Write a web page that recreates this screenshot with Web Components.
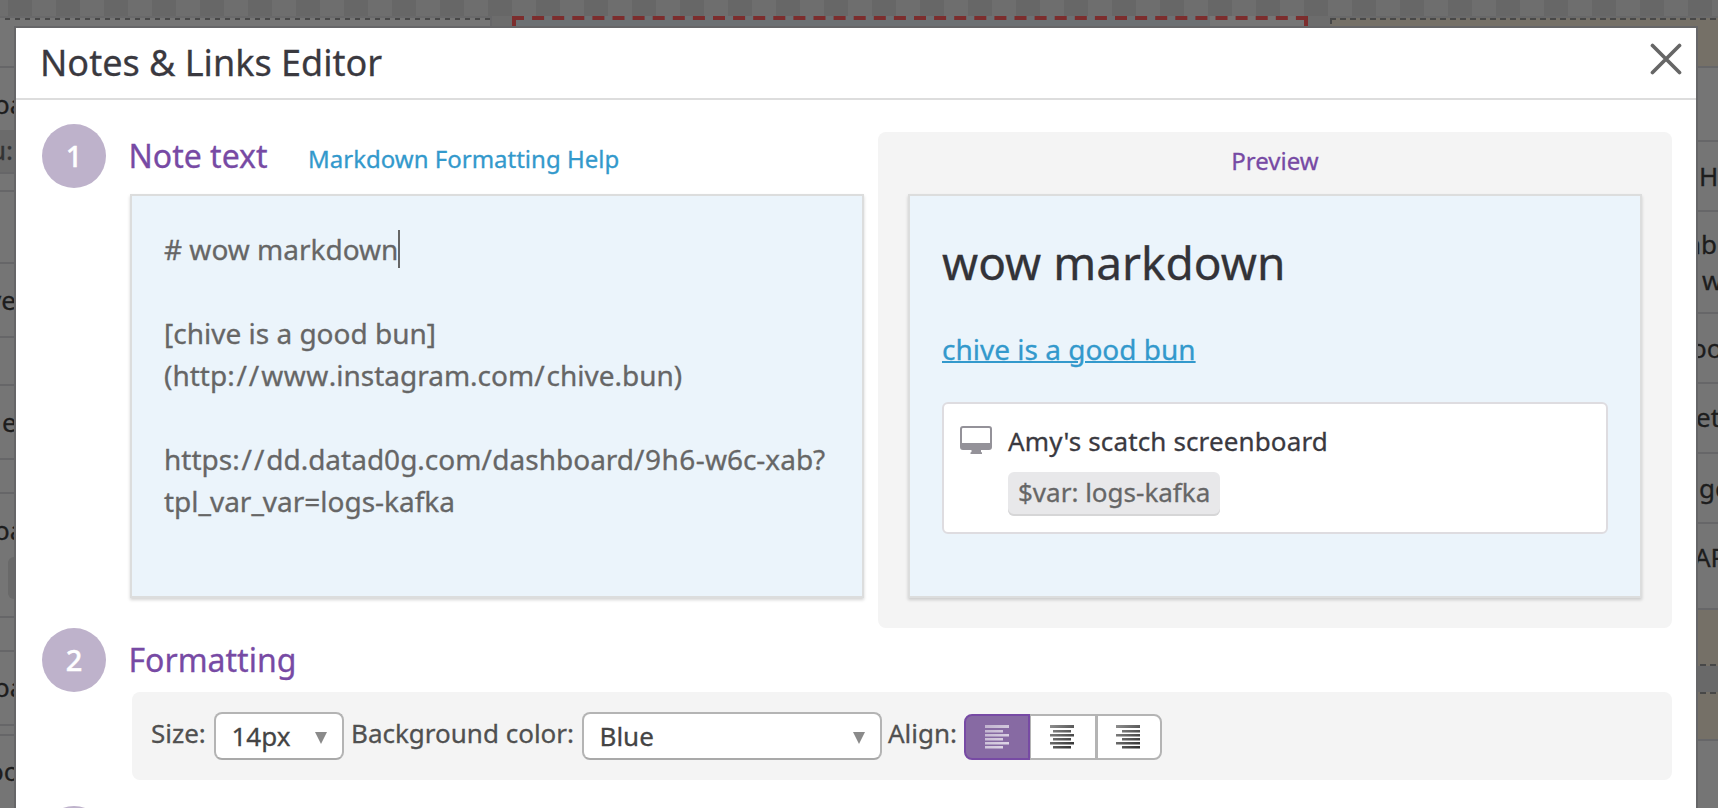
<!DOCTYPE html>
<html lang="en">
<head>
<meta charset="utf-8">
<title>Notes &amp; Links Editor</title>
<style>
html,body{margin:0;height:100%;overflow:hidden}
body{font-family:"Noto Sans","Open Sans",sans-serif;background:#696969;-webkit-text-stroke:.3px}
</style>
</head>
<body>
<app-screen></app-screen>
<script>
const define = (name, html) => customElements.define(name, class extends HTMLElement {
  constructor() {
    super();
    this.attachShadow({ mode: 'open' }).innerHTML = html.replace(/\$\{(\w+)\}/g, (_, k) => this.getAttribute(k) || '');
  }
});

/* One row of a dimmed dashboard widget list */
define('board-row', `<style>
:host{display:block;box-sizing:border-box;flex:none;overflow:hidden;background:#757575;border-bottom:2px solid #666668;color:#1d1d1d;font-size:26px;line-height:36px;white-space:pre}
:host([tone=note]){background:#757067}
:host([tone=gap]){background:#696969}
:host([tone=tag]){background:#6b6b6b;color:#333}
</style><slot></slot>`);

define('board-backdrop', `<style>
:host{display:block;position:absolute;inset:0;overflow:hidden}
.checks{height:16px;background:repeating-linear-gradient(90deg,#6e6e6e 0 8px,#676767 8px 32px,#6e6e6e 32px 48px)}
.cols{display:flex;height:792px;background:#6c6c6c}
.left{width:492px;display:flex;flex-direction:column;box-sizing:border-box;border-right:2px solid #666668}
.dash{height:4px;flex:none}
.left .dash{background:linear-gradient(#69696a,#69696a) 0 0/100% 2px no-repeat,repeating-linear-gradient(90deg,#757575 0 5px,#484848 5px 10px)}
.red{width:796px;height:30px;margin-left:20px;background:linear-gradient(90deg,#6c7073 698px,#757575 698px)}
.red svg{display:block}
.right{width:388px;margin-left:22px;display:flex;flex-direction:column}
.right .dash{background:linear-gradient(#69696a,#69696a) 0 0/100% 2px no-repeat,repeating-linear-gradient(90deg,#484848 0 6px,#757067 6px 10px)}
.right board-row{padding-left:366px}
</style>
<div class="checks"></div>
<div class="cols">
 <div class="left"><div class="dash"></div>
  <board-row style="height:48px"></board-row>
  <board-row style="height:62px;padding-top:18px;margin-left:-6px;border:0">oa</board-row>
  <board-row tone="tag" style="height:44px;padding-top:2px;margin-left:-10px">u:</board-row>
  <board-row style="height:18px"></board-row>
  <board-row style="height:72px"></board-row>
  <board-row style="height:74px;padding-top:18px;margin-left:-12px">ve</board-row>
  <board-row style="height:48px"></board-row>
  <board-row style="height:74px;padding-top:18px;padding-left:2px">e</board-row>
  <board-row style="height:34px"></board-row>
  <board-row style="height:124px;padding-top:18px;margin-left:-6px">oa<div style="margin:9px 0 0 14px;height:42px;border-radius:6px;background:#696969"></div></board-row>
  <board-row style="height:34px"></board-row>
  <board-row style="height:74px;padding-top:17px;margin-left:-6px">oa</board-row>
  <board-row style="height:10px"></board-row>
  <board-row style="height:90px;padding-top:17px;margin-left:-12px">oo</board-row>
 </div>
 <div class="red"><svg width="796" height="30"><path d="M2 12V0M794 12V0" stroke="#7c2d2d" stroke-width="4"/><path d="M0 2H796" stroke="#7c2d2d" stroke-width="4" stroke-dasharray="12 8.1"/></svg></div>
 <div class="right"><div class="dash"></div>
  <board-row tone="note" style="height:48px;background:linear-gradient(#484848,#484848) 0 0/2px 4px no-repeat #757067"></board-row>
  <board-row style="height:74px"></board-row>
  <board-row style="height:70px;padding-top:16px;padding-left:369px">H</board-row>
  <board-row style="height:102px;padding-top:14px;padding-left:355px">nb
<span style="padding-left:17px">w</span></board-row>
  <board-row style="height:70px;padding-top:16px;padding-left:361px">oo</board-row>
  <board-row style="height:70px;padding-top:15px">et</board-row>
  <board-row style="height:70px;padding-top:16px;padding-left:369px">ge</board-row>
  <board-row style="height:86px;padding-top:15px;padding-left:364px">AP</board-row>
  <board-row tone="note" style="height:54px;border:0"></board-row>
  <div class="dash" style="transform:scaleY(-1)"></div>
  <board-row tone="gap" style="height:22px;border:0"></board-row>
  <div class="dash"></div>
  <board-row tone="note" style="height:47px"></board-row>
  <board-row style="height:90px"></board-row>
 </div>
</div>`);

define('step-badge', `<style>
:host{display:block;width:64px;height:64px;border-radius:50%;background:#beb2cb;color:#fff;font-size:29px;font-weight:500;line-height:63px;text-align:center;-webkit-text-stroke:.4px}
</style><slot></slot>`);

define('step-section', `<style>
:host{display:grid;grid-template-columns:64px 1fr;column-gap:22px}
</style><step-badge>\${step}</step-badge><div><slot></slot></div>`);

define('step-heading', `<style>
:host{display:flex;align-items:baseline;height:64px;line-height:63px;padding-left:.5px;color:#774aa4;font-size:32px;white-space:pre}
::slotted(a){color:#3399cc;font-size:24px;margin-left:40.5px}
</style><slot></slot>`);

define('note-box', `<style>
:host{display:block;box-sizing:border-box;width:734px;height:404px;padding:32px;border:2px solid #dcdddd;background:#ebf4fb;box-shadow:0 2px 3px rgba(0,0,0,.17)}
</style><slot></slot>`);

define('note-source', `<style>
:host{display:block;color:#666;font-size:28px;line-height:42px;white-space:pre}
i{display:inline-block;width:2px;height:38px;margin:0 -2px 0 0;vertical-align:-8px;background:#666}
b{font-weight:400;letter-spacing:1.9px}
s{text-decoration:none;letter-spacing:.5px}
u{text-decoration:none;letter-spacing:-1.1px}
</style># wow markdown<i></i>

[chive is a good bun]
(http<b>://</b><s>www</s>.instagram.com<b>/</b>chive.bun)

https<b>://</b>dd.datad0g.com<s>/</s>dashboard<s>/9h6</s>-w6c-xab?
tpl<u>_</u>var<u>_</u>var=logs-kafka`);

define('dashboard-card', `<style>
:host{display:grid;grid-template-columns:32px 1fr;column-gap:16px;box-sizing:border-box;height:132px;padding:16px;border:2px solid #dedce0;border-radius:6px;background:#fff;font-size:26px}
svg{margin-top:6px;display:block}
.t{color:#3a393f;line-height:43px;height:52px;letter-spacing:.13px;white-space:pre}
.tag{display:inline-block;box-sizing:border-box;height:44px;line-height:41px;padding:0 10px;border-radius:6px;background:#e8e8ea;color:#666;box-shadow:inset 0 -2px #d6d6d7;white-space:pre}
</style>
<svg width="32" height="28" viewBox="0 0 32 28"><path fill="#949299" fill-rule="evenodd" d="M3 0h26a3 3 0 0 1 3 3v18a3 3 0 0 1-3 3h-8v2l1 .5V28H10.500v-1.500l1-.5v-2H3a3 3 0 0 1-3-3V3a3 3 0 0 1 3-3zM2 3v14h28V3a1 1 0 0 0-1-1H3a1 1 0 0 0-1 1z"/></svg>
<div><div class="t">Amy's scatch screenboard</div><div class="tag">$var: logs-kafka</div></div>`);

define('preview-pane', `<style>
:host{display:block;box-sizing:border-box;width:794px;height:496px;margin-top:8px;padding:0 30px;border-radius:8px;background:#f4f4f4}
.h{height:62px;line-height:57px;text-align:center;color:#774aa4;font-size:24px}
h1{margin:0;font-weight:400;font-size:46px;line-height:68px;color:#333338;white-space:pre}
a{display:block;margin-top:34px;height:72px;line-height:38px;color:#3399cc;font-size:28px;text-decoration:underline;text-decoration-thickness:2px;white-space:pre}
</style><div class="h">Preview</div><note-box><h1>wow markdown</h1><a>chive is a good bun</a><dashboard-card></dashboard-card></note-box>`);

define('select-box', `<style>
:host{display:flex;justify-content:space-between;align-items:center;box-sizing:border-box;height:48px;padding:0 15px 0 15.500px;border:2px solid #b4b4b4;border-bottom-color:#a9a9a9;border-radius:8px;background:#fff;color:#444;font-size:26px;line-height:44px}
svg{display:block;margin-top:3px}
</style><slot></slot><svg width="12" height="12"><path d="M0 0H12L6 12Z" fill="#8a8a8a"/></svg>`);

define('align-group', `<style>
:host{display:flex;width:198px;height:46px;margin-top:2px}
div{box-sizing:border-box;width:66px;height:46px;border:2px solid #b4b4b4;background:#fff;display:flex;align-items:center;justify-content:center}
.a{background:#876aa3;border-color:#774aa4;border-radius:8px 0 0 8px}
.b{border-left-width:1px;border-right-width:1px;padding-right:2px}
.c{border-radius:0 8px 8px 0;padding-right:2px}
svg{display:block}
</style>
<div class="a"><svg width="24" height="24"><defs><linearGradient id="ga" x2="1" y2="1"><stop stop-color="#c0b2ce"/><stop offset="1" stop-color="#e2dbe9"/></linearGradient></defs><path fill="url(#ga)" d="M0 0h24v3H0zM0 5h18v2.500H0zM0 9h24v2.500H0zM0 13h18v2.500H0zM0 17h24v2.500H0zM0 21h18v2.500H0z"/></svg></div>
<div class="b"><svg width="24" height="24"><defs><linearGradient id="gb" x2="1" y2="1"><stop stop-color="#909090"/><stop offset="1" stop-color="#2c2c2c"/></linearGradient></defs><path fill="url(#gb)" d="M0 0h24v3H0zM3 5h18v2.500H3zM0 9h24v2.500H0zM3 13h18v2.500H3zM0 17h24v2.500H0zM3 21h18v2.500H3z"/></svg></div>
<div class="c"><svg width="24" height="24"><defs><linearGradient id="gc" x2="1" y2="1"><stop stop-color="#909090"/><stop offset="1" stop-color="#2c2c2c"/></linearGradient></defs><path fill="url(#gc)" d="M0 0h24v3H0zM6 5h18v2.500H6zM0 9h24v2.500H0zM6 13h18v2.500H6zM0 17h24v2.500H0zM6 21h18v2.500H6z"/></svg></div>`);

define('format-bar', `<style>
:host{display:flex;align-items:flex-start;box-sizing:border-box;height:88px;margin-left:4px;width:1540px;padding:20px 0 0 19px;border-radius:8px;background:#f4f4f4;color:#505050;font-size:26px;line-height:43px}
span{white-space:pre}
</style>
<span style="width:63px">Size:</span><select-box style="width:130px">14px</select-box>
<span style="width:231px;margin-left:7px">Background color:</span><select-box style="width:300px">Blue</select-box>
<span style="width:76px;margin-left:6px">Align:</span><align-group></align-group>`);

define('editor-dialog', `<style>
:host{display:block;position:absolute;left:14px;top:26px;width:1680px;height:800px;border:2px solid #666668;background:#fff}
header{display:flex;justify-content:space-between;box-sizing:border-box;height:72px;padding:0 14px 0 24px;border-bottom:2px solid #ddd;font-size:36px;line-height:70px;color:#3a393f}
header svg{margin-top:15px}
main{padding:24px 0 0 26px}
.row{display:flex;gap:14px}
</style>
<header><span>Notes &amp; Links Editor</span><svg width="32" height="32"><path d="M2.500 2.500l27 27M29.500 2.500l-27 27" stroke="#666" stroke-width="3.700" stroke-linecap="round"/></svg></header>
<main>
<step-section step="1"><div class="row"><div><step-heading>Note text<a>Markdown Formatting Help</a></step-heading><note-box style="margin:6px 0 0 2px"><note-source></note-source></note-box></div><preview-pane></preview-pane></div></step-section>
<step-section step="2"><step-heading>Formatting</step-heading><format-bar></format-bar></step-section>
<step-section step="3" style="margin-top:26px"></step-section>
</main>`);

define('app-screen', `<style>:host{display:block;position:relative;width:1718px;height:808px;overflow:hidden}</style>
<board-backdrop></board-backdrop><editor-dialog></editor-dialog>`);
</script>
</body>
</html>
